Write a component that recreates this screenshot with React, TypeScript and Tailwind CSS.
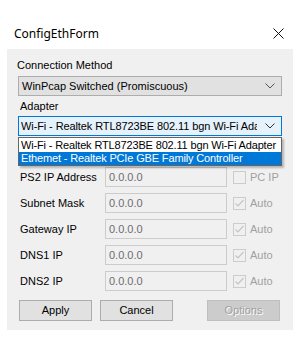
import React from 'react';

const fields = [
  { label: 'PS2 IP Address', check: 'PC IP', checked: false },
  { label: 'Subnet Mask', check: 'Auto', checked: true },
  { label: 'Gateway IP', check: 'Auto', checked: true },
  { label: 'DNS1 IP', check: 'Auto', checked: true },
  { label: 'DNS2 IP', check: 'Auto', checked: true },
];

const Chevron = ({ color }: { color: string }) => (
  <svg width="10" height="6" viewBox="0 0 10 6" className="shrink-0">
    <polyline points="0.5,0.5 5,5 9.5,0.5" fill="none" stroke={color} strokeWidth="1" />
  </svg>
);

const CheckBox = ({ checked }: { checked: boolean }) => (
  <div className="w-[13px] h-[13px] border border-[#cccccc] bg-[#f0f0f0] flex items-center justify-center">
    {checked && (
      <svg width="11" height="11" viewBox="0 0 11 11">
        <polyline points="1.5,5.5 4,8 9.5,2" fill="none" stroke="#c4c4c4" strokeWidth="1.2" />
      </svg>
    )}
  </div>
);

const App = () => {
  return (
    <div className="w-[300px] h-[350px] bg-white text-black font-['Liberation_Sans',Arial,sans-serif] text-[11px]">
      {/* title bar */}
      <div className="h-[49px] flex items-end pb-[9px] pl-[14px] pr-[16px]">
        <span className="flex-1 text-[12px] font-['Noto_Sans',sans-serif] leading-none">ConfigEthForm</span>
        <svg width="11" height="11" viewBox="0 0 11 11" className="mb-[1px]">
          <path d="M0.5 0.5 L10.5 10.5 M10.5 0.5 L0.5 10.5" stroke="#111" strokeWidth="1" />
        </svg>
      </div>

      {/* client area */}
      <div className="mx-[7px] h-[281px] bg-[#f0f0f0] px-[11px] pt-[9px]">
        <div className="-ml-[1px] leading-[14px]">Connection Method</div>
        <div className="mt-[4px] h-[20px] bg-[#e1e1e1] border border-[#adadad] flex items-center pl-[3px] pr-[6px]">
          <span className="flex-1">WinPcap Switched (Promiscuous)</span>
          <Chevron color="#555" />
        </div>
        <div className="mt-[3px] ml-[2px] leading-[14px]">Adapter</div>

        <div className="relative mt-[3px]">
          <div className="h-[20px] bg-[#e5f1fb] border border-[#0078d7] flex items-center pl-[2px] pr-[6px]">
            <span className="flex-1 whitespace-nowrap overflow-hidden tracking-[-0.1px]">Wi-Fi - Realtek RTL8723BE 802.11 bgn Wi-Fi Ada</span>
            <span className="w-[8px]" />
            <Chevron color="#333" />
          </div>
          {/* open dropdown list */}
          <div className="absolute left-0 right-0 top-[21px] z-10 border border-[#646464] bg-white shadow-[2px_2px_2px_rgba(0,0,0,0.25)]">
            <div className="h-[14px] leading-[14px] pl-[2px] whitespace-nowrap tracking-[-0.15px]">Wi-Fi - Realtek RTL8723BE 802.11 bgn Wi-Fi Adapter</div>
            <div className="h-[13px] leading-[13px] pl-[2px] bg-[#0078d7] text-white whitespace-nowrap tracking-[-0.15px]">Ethemet - Realtek PCIe GBE Family Controller</div>
          </div>
        </div>

        <div className="mt-[31px] flex flex-col gap-[6px]">
          {fields.map((f) => (
            <div key={f.label} className="flex items-center h-[20px]">
              <span className="w-[87px] pl-[2px]">{f.label}</span>
              <div className="w-[122px] h-[20px] border border-[#cccccc] bg-[#f0f0f0] text-[#6d6d6d] flex items-center pl-[3px]">
                0.0.0.0
              </div>
              <div className="ml-[6px] flex items-center gap-[4px]">
                <CheckBox checked={f.checked} />
                <span className="text-[#a0a0a0]">{f.check}</span>
              </div>
            </div>
          ))}
        </div>

        <div className="mt-[9px] flex">
          <div className="ml-[1px] w-[73px] h-[21px] bg-[#e1e1e1] border border-[#adadad] flex items-center justify-center">Apply</div>
          <div className="ml-[8px] w-[73px] h-[21px] bg-[#e1e1e1] border border-[#adadad] flex items-center justify-center">Cancel</div>
          <div className="ml-[34px] w-[73px] h-[21px] bg-[#cccccc] border border-[#bfbfbf] text-[#a0a0a0] [text-shadow:1px_1px_0_#ffffff] flex items-center justify-center">Options</div>
        </div>
      </div>
    </div>
  );
};

export default App;
